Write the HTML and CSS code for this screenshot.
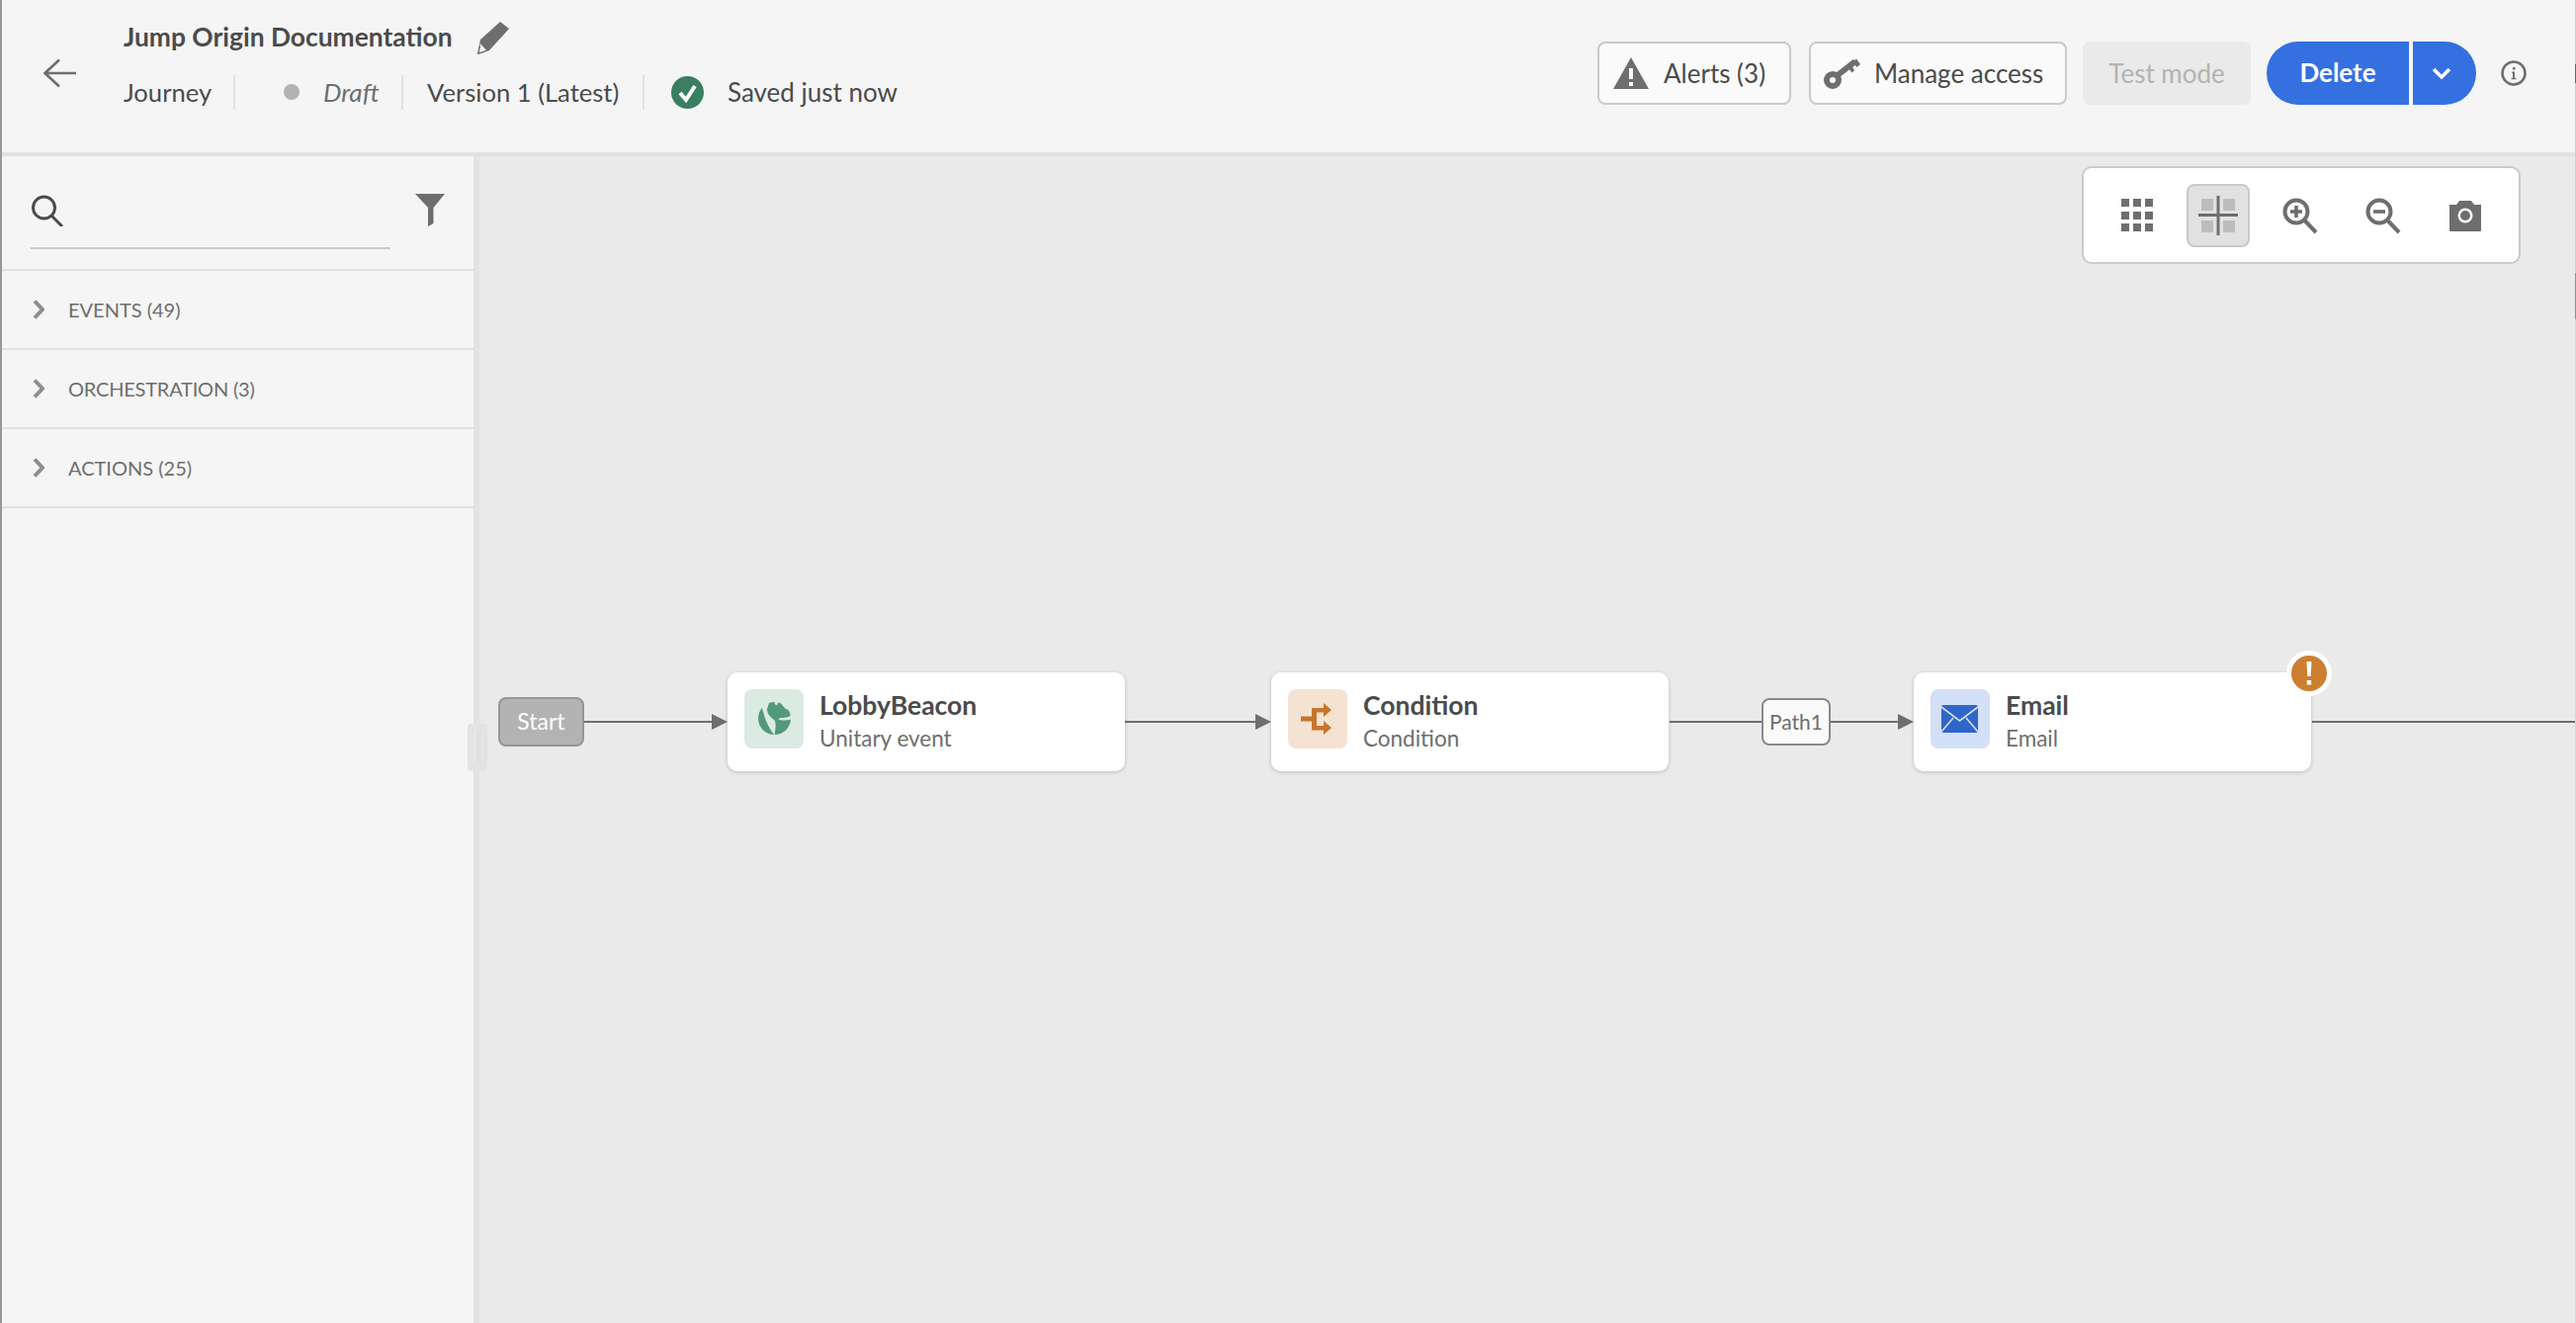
FILE: index.html
```html
<!DOCTYPE html>
<html lang="en">
<head>
<meta charset="utf-8">
<title>Jump Origin Documentation</title>
<link rel="stylesheet" href="styles.css">
</head>
<body>
<div class="app">
  <header class="header">
    <button class="back" aria-label="Back">
      <svg width="33" height="30" viewBox="0 0 33 30"><path d="M16 1.5 1.5 15 16 28.500M2 15h31" fill="none" stroke="#6e6e6e" stroke-width="2.600"/></svg>
    </button>
    <div class="heading">
      <div class="title-row">
        <span class="title">Jump Origin Documentation</span>
        <svg class="pencil" width="32" height="33" viewBox="0 0 32 33"><path d="M23 0 32 7 12 29 0 33 3 18Z" fill="#6e6e6e"/><path d="M3 22 1.500 31.500 9 29" fill="#f5f5f5"/><path d="M2.500 24 1 32l8-2.500" fill="none" stroke="#6e6e6e" stroke-width="1.300"/></svg>
      </div>
      <div class="meta-row">
        <span class="seg seg-type">Journey</span>
        <span class="seg seg-status"><i class="dot"></i><em>Draft</em></span>
        <span class="seg seg-version">Version 1 (Latest)</span>
        <span class="seg seg-saved">
          <svg width="33" height="33" viewBox="0 0 33 33"><circle cx="16.500" cy="16.500" r="16.500" fill="#3a7f5f"/><path d="m9 17 6 7 9-14" fill="none" stroke="#fff" stroke-width="4"/></svg>
          Saved just now
        </span>
      </div>
    </div>
    <div class="actions">
      <button class="btn btn-alerts">
        <svg width="36" height="32" viewBox="0 0 36 32"><path d="M18 0 36 32H0Z" fill="#6e6e6e"/><path d="M16 11h4v11h-4zM16 25h4v4h-4z" fill="#fafafa"/></svg>
        Alerts (3)
      </button>
      <button class="btn btn-access">
        <svg width="37" height="31" viewBox="0 0 37 31"><circle cx="9" cy="22" r="6" fill="none" stroke="#6e6e6e" stroke-width="6"/><path d="M14 17 32 3" fill="none" stroke="#6e6e6e" stroke-width="6"/><path d="M24 9l4.500 5.500L31 12l-3-5zM29 4l4.500 5L37 6l-4-5.500z" fill="#6e6e6e"/></svg>
        Manage access
      </button>
      <button class="btn btn-test" disabled>Test mode</button>
      <div class="split">
        <button class="split-main">Delete</button>
        <button class="split-more" aria-label="More">
          <svg width="20" height="12" viewBox="0 0 20 12"><path d="M2 2l8 8 8-8" fill="none" stroke="#fff" stroke-width="3.600"/></svg>
        </button>
      </div>
      <svg class="info" width="26" height="26" viewBox="0 0 26 26"><circle cx="13" cy="13" r="11.500" fill="none" stroke="#6e6e6e" stroke-width="2.600"/><path d="M11 11.500h3V18h1.500v1.300h-5V18H12v-5.200h-1zM12 7h2.500v2.500H12z" fill="#6e6e6e"/></svg>
    </div>
  </header>
  <div class="body">
    <aside class="sidebar">
      <div class="search">
        <div class="search-field">
          <svg width="32" height="32" viewBox="0 0 32 32"><circle cx="12.500" cy="13" r="11" fill="none" stroke="#4b4b4b" stroke-width="3"/><path d="M20 21 31 32" stroke="#4b4b4b" stroke-width="3"/></svg>
        </div>
        <svg class="filter" width="30" height="33" viewBox="0 0 30 33"><path d="M0 0H30L18.500 14V30L13 33V14Z" fill="#6e6e6e"/></svg>
      </div>
      <div class="group"><svg width="12" height="20" viewBox="0 0 12 20"><path d="M2 1.500 10 10 2 18.500" fill="none" stroke="#8e8e8e" stroke-width="4"/></svg><span>EVENTS (49)</span></div>
      <div class="group group-tight"><svg width="12" height="20" viewBox="0 0 12 20"><path d="M2 1.500 10 10 2 18.500" fill="none" stroke="#8e8e8e" stroke-width="4"/></svg><span>ORCHESTRATION (3)</span></div>
      <div class="group"><svg width="12" height="20" viewBox="0 0 12 20"><path d="M2 1.500 10 10 2 18.500" fill="none" stroke="#8e8e8e" stroke-width="4"/></svg><span>ACTIONS (25)</span></div>
    </aside>
    <div class="handle"></div>
    <main class="canvas">
      <svg class="wires" width="2121" height="1180" viewBox="0 0 2121 1180">
        <g stroke="#6e6e6e" stroke-width="2">
          <path d="M106 572H240M653 572H790M1204 572H1297M1367 572H1440M1854 572H2121"/>
        </g>
        <g fill="#6e6e6e">
          <path d="M235 564 251 572 235 580ZM785 564 801 572 785 580ZM1435 564 1451 572 1435 580Z"/>
        </g>
      </svg>
      <div class="start">Start</div>
      <div class="path-label">Path1</div>

      <div class="node node-1">
        <div class="tile tile-green">
          <svg width="60" height="60" viewBox="0 0 60 60">
            <circle cx="30.500" cy="29.500" r="16.500" fill="#52997a"/>
            <path d="M17.500 18C19 15 22 13 25.500 12.500L23 20C23 24 25 27 29.500 30.500 32.500 33 32 38 30.500 46.500 26 41 22.500 34 20.500 28 19.500 24 18.500 21 17.500 18Z" fill="#dbeae3"/>
            <path d="M48 26C43 30 38 28 34 30 37 32 42 32 48 30.500ZM31 12l3.500.500-1.500 4-2.500-1.500ZM37 12l10 10-5-2-3-3-3-4Z" fill="#dbeae3"/>
          </svg>
        </div>
        <div class="node-text"><strong>LobbyBeacon</strong><span>Unitary event</span></div>
      </div>

      <div class="node node-2">
        <div class="tile tile-orange">
          <svg width="60" height="60" viewBox="0 0 60 60"><path d="M13 27.500H24V19H36V14L44 21 36 28V23.500H29V37H36V32L44 39 36 46V41.500H24V32.500H13Z" fill="#c7752d"/></svg>
        </div>
        <div class="node-text"><strong>Condition</strong><span>Condition</span></div>
      </div>

      <div class="node node-3">
        <div class="tile tile-blue">
          <svg width="60" height="60" viewBox="0 0 60 60"><rect x="11" y="16" width="37" height="28" rx="2" fill="#2f66cc"/><path d="M11 18 29.500 32 48 18M11 43 23 29M48 43 36 29" fill="none" stroke="#d3e0f6" stroke-width="1.600"/></svg>
        </div>
        <div class="node-text"><strong>Email</strong><span>Email</span></div>
      </div>
      <div class="badge">
        <svg width="36" height="36" viewBox="0 0 36 36"><circle cx="18" cy="18" r="18" fill="#cc7f30"/><path d="M15.500 6h5l-.8 15h-3.400zM15.800 25h4.400v4.500h-4.400z" fill="#fff"/></svg>
      </div>

      <div class="toolbar">
        <button class="tool">
          <svg width="64" height="64" viewBox="-1 0 64 64" fill="#6e6e6e"><path d="M16 15h8v8h-8zM28 15h8v8h-8zM40 15h8v8h-8zM16 28h8v8h-8zM28 28h8v8h-8zM40 28h8v8h-8zM16 40h8v8h-8zM28 40h8v8h-8zM40 40h8v8h-8z"/></svg>
        </button>
        <button class="tool tool-on">
          <svg width="60" height="60" viewBox="0 0 60 60"><path d="M13 13h12v12H13zM35 13h12v12H35zM13 35h12v12H13zM35 35h12v12H35z" fill="#bcbcbc"/><path d="M30 10v40M10 29.500h40" stroke="#6e6e6e" stroke-width="3"/></svg>
        </button>
        <button class="tool">
          <svg width="64" height="64" viewBox="0 0 64 64"><circle cx="28" cy="28" r="11.500" fill="none" stroke="#6e6e6e" stroke-width="4"/><path d="M36.500 37 48 49" stroke="#6e6e6e" stroke-width="4"/><path d="M22 28h12M28 22v12" stroke="#6e6e6e" stroke-width="3.600"/></svg>
        </button>
        <button class="tool">
          <svg width="64" height="64" viewBox="-1 0 64 64"><circle cx="28" cy="28" r="11.500" fill="none" stroke="#6e6e6e" stroke-width="4"/><path d="M36.500 37 48 49" stroke="#6e6e6e" stroke-width="4"/><path d="M22 28h12" stroke="#6e6e6e" stroke-width="3.600"/></svg>
        </button>
        <button class="tool">
          <svg width="64" height="64" viewBox="-1 1 64 64"><path d="M16 22h7l3-4h12l3 4h7v26a1 1 0 0 1-1 1H17a1 1 0 0 1-1-1Z" fill="#6e6e6e"/><circle cx="32" cy="33" r="7.500" fill="#fff"/><circle cx="32" cy="33" r="5" fill="#6e6e6e"/></svg>
        </button>
      </div>
    </main>
  </div>
  <div class="edge"></div>
</div>
</body>
</html>
```
FILE: styles.css
```css
* { box-sizing: border-box; }
html, body { margin: 0; height: 100%; overflow: hidden; }
body { font-family: "Lato", "Noto Sans", sans-serif; color: #4b4b4b; background: #eaeaea; }
button { font: inherit; color: inherit; padding: 0; border: 0; background: none; }

.app { position: relative; display: flex; flex-direction: column; height: 100vh; border-left: 2px solid #989898; }

.header { display: flex; align-items: flex-start; height: 158px; background: #f5f5f5; border-bottom: 4px solid #e1e1e1; padding-left: 42px; flex: none; }
.back { width: 33px; height: 30px; margin-top: 59px; margin-right: 48px; display: block; }
.back svg { display: block; }
.heading { padding-top: 15px; }
.title-row { display: flex; align-items: center; height: 44px; }
.title { font-size: 26.400px; font-weight: 700; width: 358px; white-space: nowrap; }
.pencil { display: block; margin-top: 2px; }
.meta-row { display: flex; align-items: center; height: 68px; font-size: 25.600px; white-space: nowrap; }
.seg { display: flex; align-items: center; height: 35px; }
.seg-type { width: 113px; border-right: 2px solid #e1e1e1; }
.seg-status { width: 170px; padding-left: 49px; border-right: 2px solid #e1e1e1; }
.dot { width: 16px; height: 16px; border-radius: 50%; background: #b3b3b3; margin-right: 24px; }
.seg-status em { color: #6e6e6e; font-size: 26px; }
.seg-version { width: 244px; padding-left: 24px; border-right: 2px solid #e1e1e1; }
.seg-saved { padding-left: 27px; gap: 24px; font-size: 26px; }

.actions { margin-left: auto; display: flex; align-items: center; height: 64px; margin-top: 42px; padding-right: 50px; }
.btn { display: flex; align-items: center; height: 64px; border-radius: 8px; font-size: 26px; white-space: nowrap; }
.btn-alerts, .btn-access { background: #fafafa; border: 2px solid #cacaca; }
.btn-alerts { width: 196px; padding-left: 14px; gap: 15px; margin-right: 18px; }
.btn-access { width: 261px; padding-left: 13px; gap: 14px; margin-right: 16px; }
.btn-test { width: 170px; justify-content: center; background: #eaeaea; color: #b3b3b3; margin-right: 16px; }
.split { display: flex; height: 64px; margin-right: 25px; }
.split-main { width: 144px; padding-bottom: 2px; background: #3570e0; color: #fff; font-size: 26px; font-weight: 700; border-radius: 32px 0 0 32px; }
.split-more { width: 64px; margin-left: 4px; background: #3570e0; border-radius: 0 32px 32px 0; display: flex; align-items: center; justify-content: center; padding-right: 6px; }
.info { display: block; }

.body { position: relative; flex: 1; display: flex; min-height: 0; }
.sidebar { width: 483px; flex: none; background: #f5f5f5; border-right: 6px solid #e3e3e3; }
.search { display: flex; align-items: flex-start; height: 116px; padding-left: 29px; border-bottom: 2px solid #e1e1e1; }
.search-field { width: 364px; height: 94px; padding: 39px 0 0 1px; border-bottom: 2px solid #cacaca; }
.search-field svg { display: block; }
.filter { margin: 38px 0 0 25px; display: block; }
.group { display: flex; align-items: center; height: 80px; padding-left: 31px; gap: 24px; border-bottom: 2px solid #e1e1e1; font-size: 20px; color: #6e6e6e; }
.group svg { display: block; }
.group-tight span { letter-spacing: -.2px; }

.handle { position: absolute; z-index: 1; left: 471px; top: 574px; width: 20px; height: 48px; border-radius: 4px; background: #e3e3e3; }
.handle::after { content: ""; position: absolute; left: 7px; top: 7px; width: 6px; height: 33px; background: #e0e0e0; border-left: 1px solid #ebebeb; border-right: 1px solid #ebebeb; }

.canvas { position: relative; flex: 1; background: #eaeaea; overflow: hidden; }
.wires { position: absolute; left: 0; top: 0; }

.start { position: absolute; left: 19px; top: 547px; width: 87px; height: 50px; padding-bottom: 2px; display: flex; align-items: center; justify-content: center; background: #b3b3b3; border: 2px solid #959595; border-radius: 8px; color: #fff; font-size: 23px; }
.path-label { position: absolute; left: 1297px; top: 548px; width: 70px; height: 48px; padding-bottom: 2px; display: flex; align-items: center; justify-content: center; background: #fafafa; border: 2px solid #8a8a8a; border-radius: 8px; color: #6e6e6e; font-size: 21px; }

.node { position: absolute; top: 522px; width: 402px; height: 100px; display: flex; align-items: center; padding-left: 17px; background: #fff; border-radius: 10px; box-shadow: 0 1px 4px rgba(0, 0, 0, .2); }
.node-1 { left: 251px; }
.node-2 { left: 801px; }
.node-3 { left: 1451px; }
.tile { width: 60px; height: 60px; border-radius: 8px; flex: none; align-self: flex-start; margin-top: 17px; }
.tile svg { display: block; }
.tile-green { background: #dbeae3; }
.tile-orange { background: #f4e3d2; }
.tile-blue { background: #d3e0f6; }
.node-text { display: flex; flex-direction: column; margin-left: 16px; margin-top: -1px; }
.node-text strong { font-size: 26.500px; line-height: 34px; color: #4b4b4b; }
.node-text span { font-size: 22.500px; line-height: 34px; color: #6e6e6e; }

.badge { position: absolute; left: 1828px; top: 500px; width: 46px; height: 46px; display: flex; align-items: center; justify-content: center; background: #fff; border-radius: 50%; }
.badge svg { display: block; }

.toolbar { position: absolute; right: 56px; top: 10px; width: 444px; height: 99px; display: flex; align-items: center; gap: 19px; padding-left: 21px; background: #fff; border: 2px solid #cacaca; border-radius: 10px; }
.tool { width: 64px; height: 64px; border-radius: 8px; display: flex; align-items: center; justify-content: center; flex: none; }
.tool svg { display: block; }
.tool-on { background: #e1e1e1; border: 2px solid #c8c8c8; }

.edge { position: absolute; right: 0; top: 0; bottom: 0; width: 1px; background: linear-gradient(#cfcfd6 0 65px, #666 65px 84px, #cfcfd6 84px 276px, #7b93c4 276px 323px, #d8d8d8 323px); }
```
